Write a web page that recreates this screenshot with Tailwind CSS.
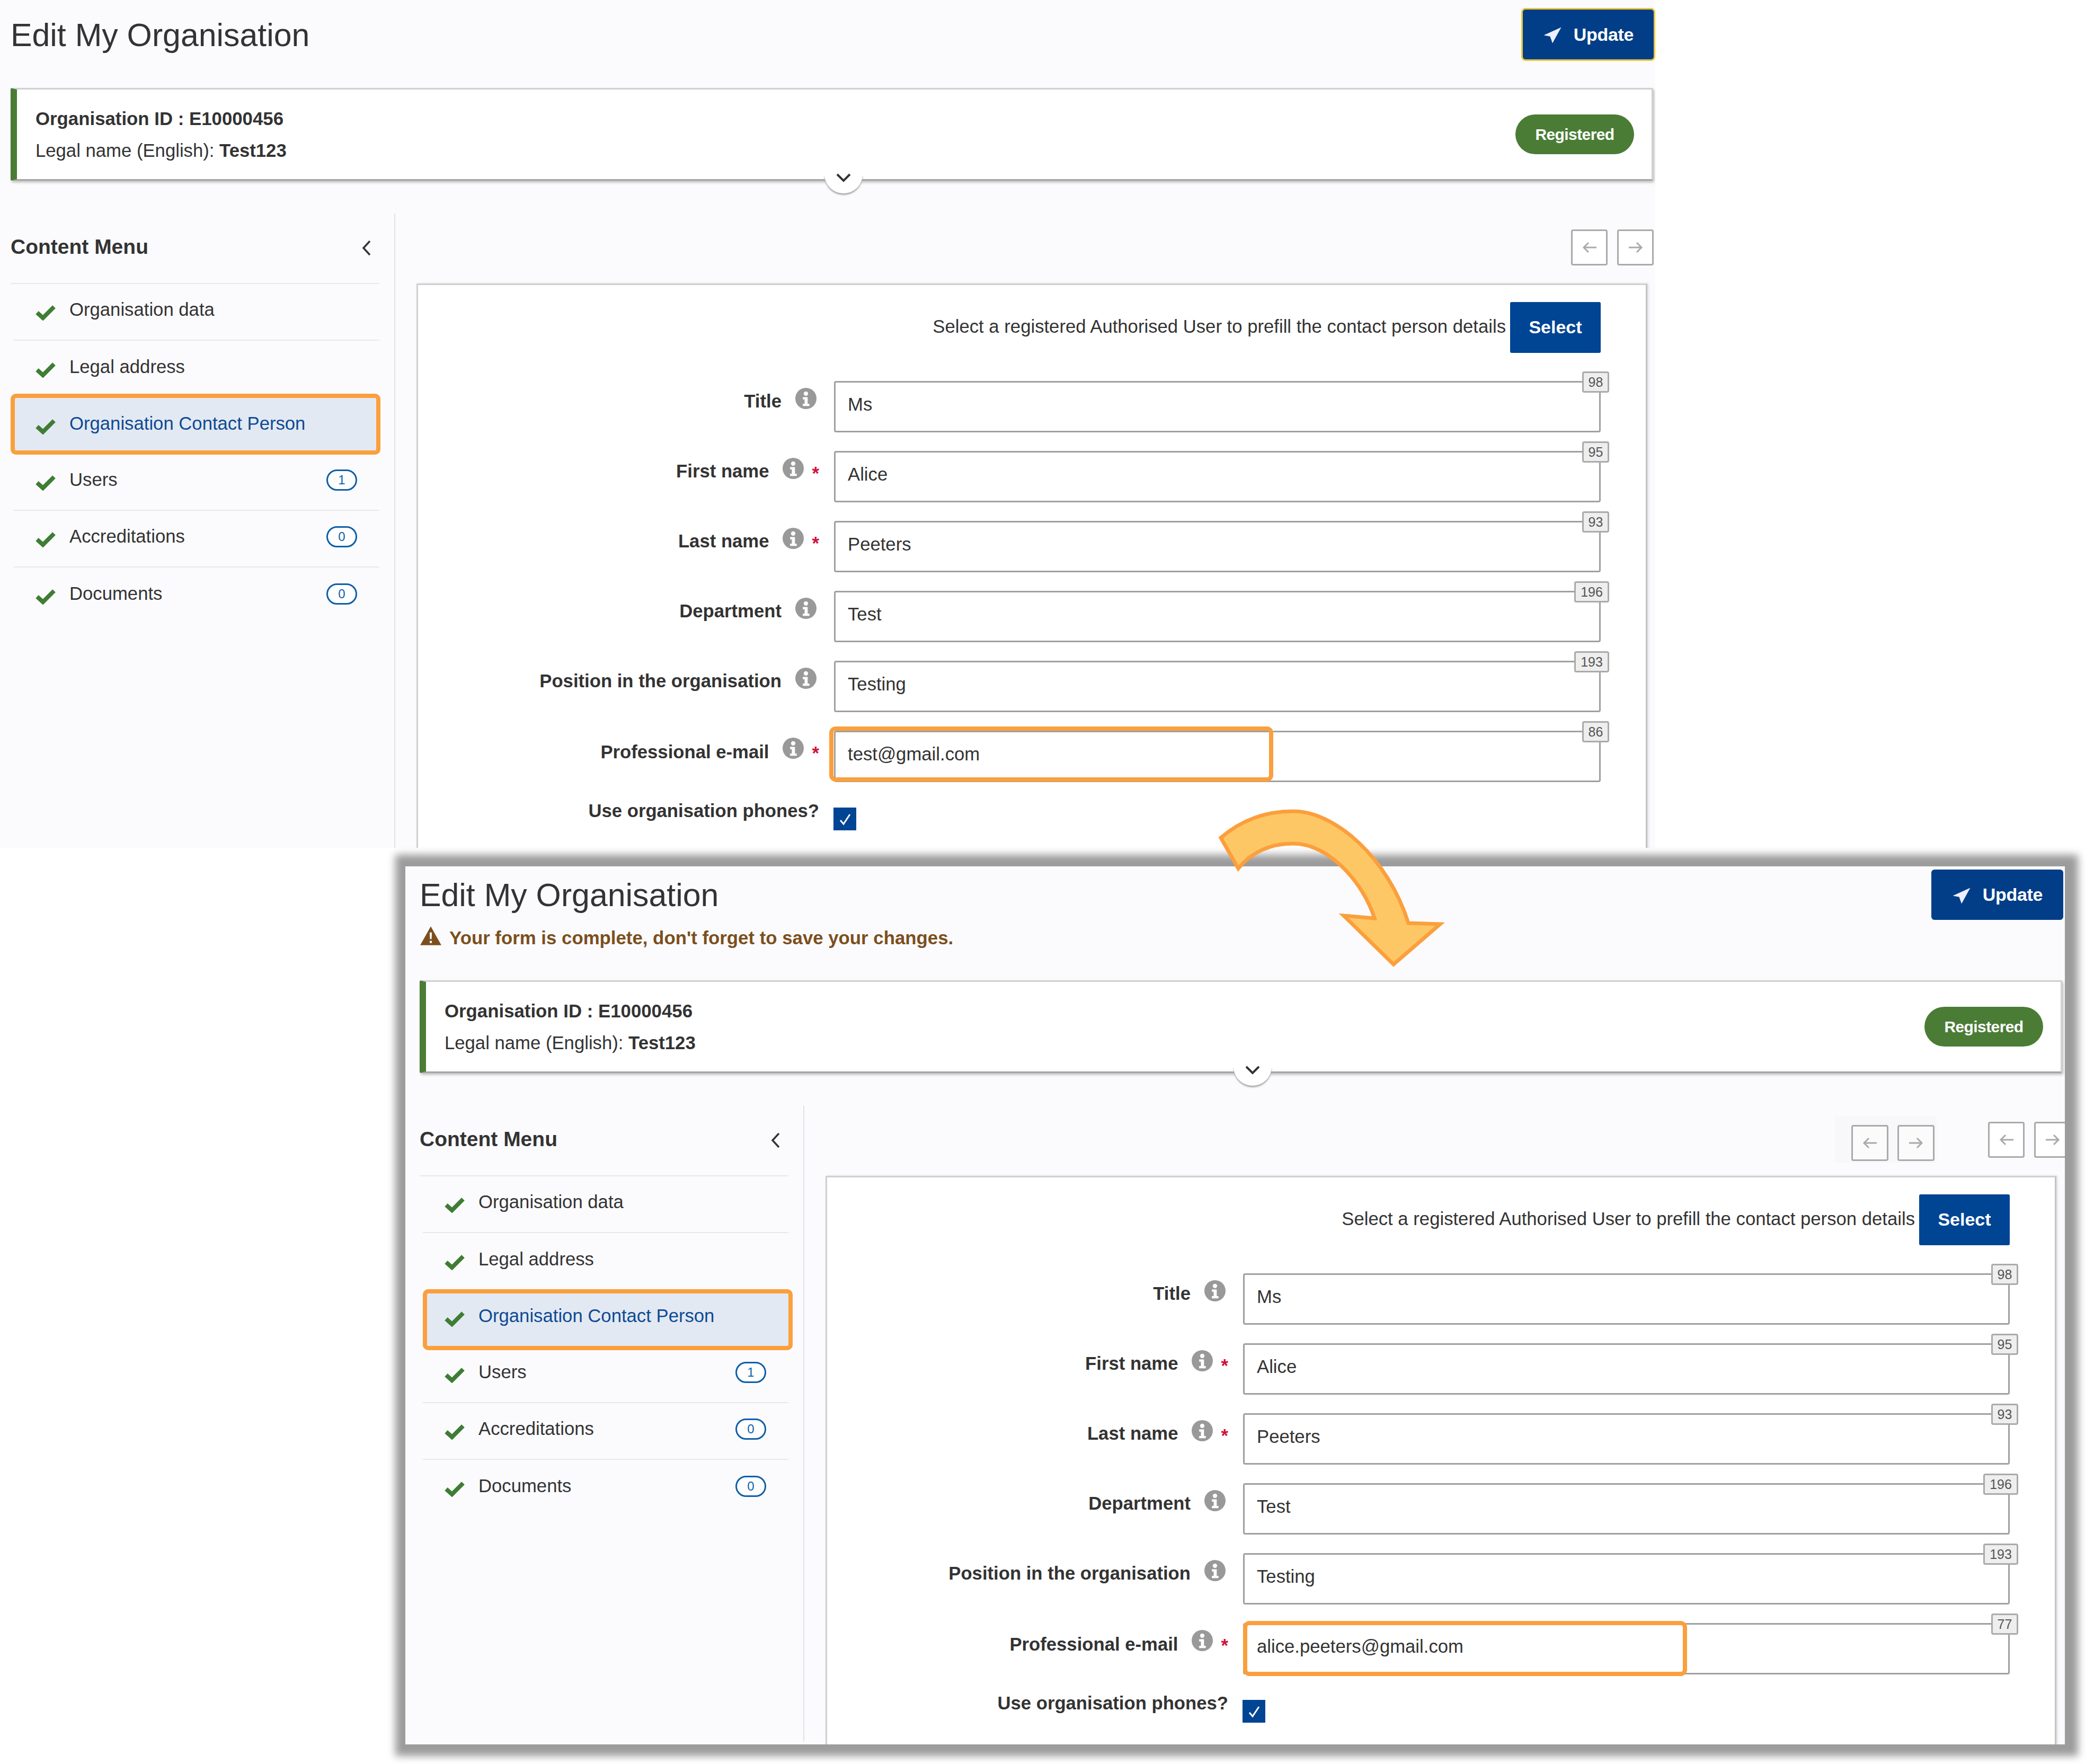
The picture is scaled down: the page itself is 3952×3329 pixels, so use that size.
<!DOCTYPE html>
<html><head><meta charset="utf-8">
<script src="https://cdn.jsdelivr.net/npm/@tailwindcss/browser@4"></script>
<title>Edit My Organisation</title></head>
<body class="bg-white">
<div class="relative w-[3952px] h-[3329px] overflow-hidden bg-white font-['Liberation_Sans',Arial,sans-serif] text-[34.7px] text-[#333]">

<!-- PANEL 1 -->
<section class="absolute left-0 top-0 w-[3124px] h-[1600px] overflow-hidden bg-[#fbfbfe]">
  <header class="flex justify-between h-[166px]">
    <h1 class="ml-[20px] mt-[32px] text-[60.8px] leading-[68px] font-normal text-[#333]">Edit My Organisation</h1>
    <button class="mt-[15px] w-[253px] h-[100px] flex items-center justify-center gap-[22px] bg-[#023e88] border-[3px] border-[#eac838] rounded-[8px] text-white font-bold text-[34px] tracking-[-0.3px]">
      <svg class="w-[36px] h-[36px]" viewBox="0 0 24 24"><path fill="#eef" d="M23 3 1 13l8 1.500L12 23z"/></svg><span>Update</span></button>
  </header>
  <div class="relative ml-[20px] w-[3100px] h-[175px] flex justify-between items-center bg-white border-[3px] border-l-[12px] border-[#d0d0d0] border-l-[#4a7c36] border-b-[#a5a5a5] rounded-[3px] shadow-[2px_3px_5px_#bbb]">
    <div class="pl-[35px] leading-[61px]">
      <p class="font-bold text-[34.8px]">Organisation ID : E10000456</p>
      <p>Legal name (English): <b>Test123</b></p>
    </div>
    <span class="mr-[33px] w-[224px] h-[75px] flex items-center justify-center rounded-full bg-[#4a7c36] text-white font-bold text-[30px] tracking-[-0.6px]">Registered</span>
    <span class="absolute left-[1524px] top-[160px] w-[72px] h-[36px] flex items-start justify-center rounded-b-full bg-white shadow-[0_3px_3px_#aaa]">
      <svg class="w-[32px] h-[24px] mt-[-6px]" viewBox="0 0 32 24" fill="none" stroke="#333" stroke-width="4"><path d="M4 6l12 12L28 6"/></svg></span>
  </div>
  <main class="flex mt-[62px]">
    <aside class="ml-[20px] w-[726px] h-[1200px] border-r-2 border-[#e2e2e6] pr-[28px]">
      <div class="relative h-[133px] ml-0 pt-[41px] border-b-2 border-[#e8e8ea]">
        <h2 class="font-bold text-[39px] leading-[44px] text-[#333]">Content Menu</h2>
        <svg class="absolute right-[14px] top-[50px] w-[20px] h-[30px]" viewBox="0 0 20 30" fill="none" stroke="#333" stroke-width="3.500"><path d="M16 2 4 15l12 13"/></svg>
      </div>
      <ul class="ml-[6px]">
        <li class="flex items-center h-[107px] pl-[41px] pb-[8px] border-b-2 border-[#e8e8ea]"><svg class="w-[38px] h-[30px] mr-[26px] mt-[10px]" viewBox="0 0 38 30" fill="none" stroke="#3f7d35" stroke-width="8"><path d="M3 15l11 10L35 4"/></svg><span>Organisation data</span></li>
        <li class="flex items-center h-[107px] pl-[41px] pb-[8px]"><svg class="w-[38px] h-[30px] mr-[26px] mt-[10px]" viewBox="0 0 38 30" fill="none" stroke="#3f7d35" stroke-width="8"><path d="M3 15l11 10L35 4"/></svg><span>Legal address</span></li>
        <li class="relative flex items-center -ml-[6px] w-[698px] h-[115px] -mt-[7px] -mb-[1px] pl-[39px] pb-[2px] border-[8px] border-[#fb9f3c] rounded-[10px] bg-[#e3e9f2] text-[#0e4a94]"><svg class="w-[38px] h-[30px] mr-[26px] mt-[10px]" viewBox="0 0 38 30" fill="none" stroke="#3f7d35" stroke-width="8"><path d="M3 15l11 10L35 4"/></svg><span>Organisation Contact Person</span></li>
        <li class="flex items-center h-[107px] pl-[41px] pb-[8px] border-b-2 border-[#e8e8ea]"><svg class="w-[38px] h-[30px] mr-[26px] mt-[10px]" viewBox="0 0 38 30" fill="none" stroke="#3f7d35" stroke-width="8"><path d="M3 15l11 10L35 4"/></svg><span>Users</span><span class="ml-auto mr-[42px] w-[58px] h-[40px] flex items-center justify-center rounded-full border-[3px] border-[#0e5fa8] bg-white text-[#0e5fa8] text-[24px]">1</span></li>
        <li class="flex items-center h-[107px] pl-[41px] pb-[8px] border-b-2 border-[#e8e8ea]"><svg class="w-[38px] h-[30px] mr-[26px] mt-[10px]" viewBox="0 0 38 30" fill="none" stroke="#3f7d35" stroke-width="8"><path d="M3 15l11 10L35 4"/></svg><span>Accreditations</span><span class="ml-auto mr-[42px] w-[58px] h-[40px] flex items-center justify-center rounded-full border-[3px] border-[#0e5fa8] bg-white text-[#0e5fa8] text-[24px]">0</span></li>
        <li class="flex items-center h-[107px] pl-[41px] pb-[8px]"><svg class="w-[38px] h-[30px] mr-[26px] mt-[10px]" viewBox="0 0 38 30" fill="none" stroke="#3f7d35" stroke-width="8"><path d="M3 15l11 10L35 4"/></svg><span>Documents</span><span class="ml-auto mr-[42px] w-[58px] h-[40px] flex items-center justify-center rounded-full border-[3px] border-[#0e5fa8] bg-white text-[#0e5fa8] text-[24px]">0</span></li>
      </ul>
    </aside>
    <div class="flex-1">
      <div class="flex justify-end gap-[18px] h-[132px] pt-[30px] pr-[3px]">
        <span class="w-[69px] h-[68px] flex items-center justify-center bg-white border-[3px] border-[#aaa] rounded-[4px]"><svg class="w-[28px] h-[24px]" viewBox="0 0 28 24" fill="none" stroke="#aaa" stroke-width="3"><path d="M27 12H3M12 3l-9 9 9 9"/></svg></span>
        <span class="w-[69px] h-[68px] flex items-center justify-center bg-white border-[3px] border-[#aaa] rounded-[4px]"><svg class="w-[28px] h-[24px]" viewBox="0 0 28 24" fill="none" stroke="#aaa" stroke-width="3"><path d="M1 12h24M16 3l9 9-9 9"/></svg></span>
      </div>
      <div class="ml-[40px] w-[2323px] h-[1200px] bg-white border-[3px] border-b-0 border-[#d0d0d0] border-r-[#c4c4c4] shadow-[2px_0_4px_#ddd]">
        <div class="flex justify-end items-center gap-[8px] mt-[32px] pr-[85px]">
          <span class="-mt-[4px]">Select a registered Authorised User to prefill the contact person details</span>
          <span class="w-[171px] h-[96px] pb-[2px] flex items-center justify-center bg-[#004494] rounded-[3px] text-white font-bold text-[34px]">Select</span>
        </div>
        <div class="mt-[53px]">
          <div class="flex h-[132px]"><div class="flex justify-end w-[785px] pr-[33px] pt-[14px] items-start"><span class="font-bold mt-[4px] leading-[40px]">Title</span><svg class="w-[40px] h-[40px] ml-[26px] -mt-[1px]" viewBox="0 0 24 24"><circle cx="12" cy="12" r="12" fill="#999"/><circle cx="12" cy="6.500" r="2.500" fill="#fff"/><path fill="#fff" d="M8.500 10.500h5.500v7.500h2v2.500H8.500V18h2v-5h-2z"/></svg></div><div class="relative w-[1447px] h-[97px] border-[3px] border-[#a0a0a0] rounded-[4px] bg-white pl-[23px] pt-[21px] leading-[40px]">Ms<span class="absolute right-[-19px] top-[-21px] w-[51px] h-[40px] flex items-center justify-center bg-[#eee] border-[3px] border-[#aaa] rounded-[4px] text-[25px] text-[#555]">98</span></div></div>
          <div class="flex h-[132px]"><div class="flex justify-end w-[785px] pr-[28px] pt-[14px] items-start"><span class="font-bold mt-[4px] leading-[40px]">First name</span><svg class="w-[40px] h-[40px] ml-[25px] -mt-[1px]" viewBox="0 0 24 24"><circle cx="12" cy="12" r="12" fill="#999"/><circle cx="12" cy="6.500" r="2.500" fill="#fff"/><path fill="#fff" d="M8.500 10.500h5.500v7.500h2v2.500H8.500V18h2v-5h-2z"/></svg><span class="ml-[16px] mt-[8px] text-[#d0103a] font-bold leading-[40px]">*</span></div><div class="relative w-[1447px] h-[97px] border-[3px] border-[#a0a0a0] rounded-[4px] bg-white pl-[23px] pt-[21px] leading-[40px]">Alice<span class="absolute right-[-19px] top-[-21px] w-[51px] h-[40px] flex items-center justify-center bg-[#eee] border-[3px] border-[#aaa] rounded-[4px] text-[25px] text-[#555]">95</span></div></div>
          <div class="flex h-[132px]"><div class="flex justify-end w-[785px] pr-[28px] pt-[14px] items-start"><span class="font-bold mt-[4px] leading-[40px]">Last name</span><svg class="w-[40px] h-[40px] ml-[25px] -mt-[1px]" viewBox="0 0 24 24"><circle cx="12" cy="12" r="12" fill="#999"/><circle cx="12" cy="6.500" r="2.500" fill="#fff"/><path fill="#fff" d="M8.500 10.500h5.500v7.500h2v2.500H8.500V18h2v-5h-2z"/></svg><span class="ml-[16px] mt-[8px] text-[#d0103a] font-bold leading-[40px]">*</span></div><div class="relative w-[1447px] h-[97px] border-[3px] border-[#a0a0a0] rounded-[4px] bg-white pl-[23px] pt-[21px] leading-[40px]">Peeters<span class="absolute right-[-19px] top-[-21px] w-[51px] h-[40px] flex items-center justify-center bg-[#eee] border-[3px] border-[#aaa] rounded-[4px] text-[25px] text-[#555]">93</span></div></div>
          <div class="flex h-[132px]"><div class="flex justify-end w-[785px] pr-[33px] pt-[14px] items-start"><span class="font-bold mt-[4px] leading-[40px]">Department</span><svg class="w-[40px] h-[40px] ml-[26px] -mt-[1px]" viewBox="0 0 24 24"><circle cx="12" cy="12" r="12" fill="#999"/><circle cx="12" cy="6.500" r="2.500" fill="#fff"/><path fill="#fff" d="M8.500 10.500h5.500v7.500h2v2.500H8.500V18h2v-5h-2z"/></svg></div><div class="relative w-[1447px] h-[97px] border-[3px] border-[#a0a0a0] rounded-[4px] bg-white pl-[23px] pt-[21px] leading-[40px]">Test<span class="absolute right-[-19px] top-[-21px] w-[66px] h-[40px] flex items-center justify-center bg-[#eee] border-[3px] border-[#aaa] rounded-[4px] text-[25px] text-[#555]">196</span></div></div>
          <div class="flex h-[132px]"><div class="flex justify-end w-[785px] pr-[33px] pt-[14px] items-start"><span class="font-bold mt-[4px] leading-[40px]">Position in the organisation</span><svg class="w-[40px] h-[40px] ml-[26px] -mt-[1px]" viewBox="0 0 24 24"><circle cx="12" cy="12" r="12" fill="#999"/><circle cx="12" cy="6.500" r="2.500" fill="#fff"/><path fill="#fff" d="M8.500 10.500h5.500v7.500h2v2.500H8.500V18h2v-5h-2z"/></svg></div><div class="relative w-[1447px] h-[97px] border-[3px] border-[#a0a0a0] rounded-[4px] bg-white pl-[23px] pt-[21px] leading-[40px]">Testing<span class="absolute right-[-19px] top-[-21px] w-[66px] h-[40px] flex items-center justify-center bg-[#eee] border-[3px] border-[#aaa] rounded-[4px] text-[25px] text-[#555]">193</span></div></div>
          <div class="flex h-[132px]"><div class="flex justify-end w-[785px] pr-[28px] pt-[14px] items-start"><span class="font-bold mt-[6px] leading-[40px]">Professional e-mail</span><svg class="w-[40px] h-[40px] ml-[25px] -mt-[1px]" viewBox="0 0 24 24"><circle cx="12" cy="12" r="12" fill="#999"/><circle cx="12" cy="6.500" r="2.500" fill="#fff"/><path fill="#fff" d="M8.500 10.500h5.500v7.500h2v2.500H8.500V18h2v-5h-2z"/></svg><span class="ml-[16px] mt-[8px] text-[#d0103a] font-bold leading-[40px]">*</span></div><div class="relative w-[1447px] h-[97px] border-[3px] border-[#a0a0a0] rounded-[4px] bg-white pl-[23px] pt-[21px] leading-[40px]">test@gmail.com<span class="absolute left-[-12px] top-[-11px] w-[838px] h-[104px] border-[8px] border-[#fb9f3c] rounded-[12px]"></span><span class="absolute right-[-19px] top-[-21px] w-[51px] h-[40px] flex items-center justify-center bg-[#eee] border-[3px] border-[#aaa] rounded-[4px] text-[25px] text-[#555]">86</span></div></div>
          <div class="flex h-[60px]"><div class="flex justify-end w-[785px] pr-[28px]"><span class="font-bold leading-[40px] -mt-[1px]">Use organisation phones?</span></div><span class="w-[43px] h-[43px] mt-[13px] -ml-[1px] flex items-center justify-center bg-[#004494]"><svg class="w-[30px] h-[30px]" viewBox="0 0 30 30" fill="none" stroke="#fff" stroke-width="3"><path d="M6 17l6 7L24 6"/></svg></span></div>
        </div>
      </div>
    </div>
  </main>
</section>

<!-- PANEL 2 -->
<section class="absolute left-[765px] top-[1635px] w-[3132px] h-[1657px] overflow-hidden bg-[#fbfbfe] shadow-[3px_0_14px_22px_#9c9c9c]">
 <div class="ml-[7px] w-[3124px]">
  <header class="relative flex justify-between h-[215px]">
    <div class="ml-[20px]">
      <h1 class="mt-[20px] text-[60.8px] leading-[68px] font-normal text-[#333]">Edit My Organisation</h1>
      <p class="flex items-center mt-[21px] font-bold text-[34.8px] text-[#7b4f1d]"><svg class="w-[42px] h-[38px] mr-[14px] -mt-[8px]" viewBox="0 0 40 36"><path fill="#7b4f1d" d="M20 1 39 35H1z"/><path fill="#fbfbfe" d="M18 12h4l-.5 12h-3zM18 27h4v4h-4z"/></svg>Your form is complete, don't forget to save your changes.</p>
    </div>
    <button class="mt-[6px] mr-[2px] w-[249px] h-[95px] flex items-center justify-center gap-[22px] bg-[#023e88] rounded-[6px] text-white font-bold text-[34px] tracking-[-0.3px]">
      <svg class="w-[36px] h-[36px]" viewBox="0 0 24 24"><path fill="#eef" d="M23 3 1 13l8 1.500L12 23z"/></svg><span>Update</span></button>
  </header>
  <div class="relative ml-[20px] w-[3100px] h-[175px] flex justify-between items-center bg-white border-[3px] border-l-[12px] border-[#d0d0d0] border-l-[#4a7c36] border-b-[#a5a5a5] rounded-[3px] shadow-[2px_3px_5px_#bbb]">
    <div class="pl-[35px] leading-[61px]">
      <p class="font-bold text-[34.8px]">Organisation ID : E10000456</p>
      <p>Legal name (English): <b>Test123</b></p>
    </div>
    <span class="mr-[33px] w-[224px] h-[75px] flex items-center justify-center rounded-full bg-[#4a7c36] text-white font-bold text-[30px] tracking-[-0.6px]">Registered</span>
    <span class="absolute left-[1524px] top-[160px] w-[72px] h-[36px] flex items-start justify-center rounded-b-full bg-white shadow-[0_3px_3px_#aaa]">
      <svg class="w-[32px] h-[24px] mt-[-6px]" viewBox="0 0 32 24" fill="none" stroke="#333" stroke-width="4"><path d="M4 6l12 12L28 6"/></svg></span>
  </div>
  <main class="flex mt-[62px]">
    <aside class="ml-[20px] w-[726px] h-[1200px] border-r-2 border-[#e2e2e6] pr-[28px]">
      <div class="relative h-[133px] pt-[41px] border-b-2 border-[#e8e8ea]">
        <h2 class="font-bold text-[39px] leading-[44px] text-[#333]">Content Menu</h2>
        <svg class="absolute right-[14px] top-[50px] w-[20px] h-[30px]" viewBox="0 0 20 30" fill="none" stroke="#333" stroke-width="3.500"><path d="M16 2 4 15l12 13"/></svg>
      </div>
      <ul class="ml-[6px]">
        <li class="flex items-center h-[107px] pl-[41px] pb-[8px] border-b-2 border-[#e8e8ea]"><svg class="w-[38px] h-[30px] mr-[26px] mt-[10px]" viewBox="0 0 38 30" fill="none" stroke="#3f7d35" stroke-width="8"><path d="M3 15l11 10L35 4"/></svg><span>Organisation data</span></li>
        <li class="flex items-center h-[107px] pl-[41px] pb-[8px]"><svg class="w-[38px] h-[30px] mr-[26px] mt-[10px]" viewBox="0 0 38 30" fill="none" stroke="#3f7d35" stroke-width="8"><path d="M3 15l11 10L35 4"/></svg><span>Legal address</span></li>
        <li class="relative flex items-center w-[698px] h-[115px] -mt-[1px] -mb-[7px] pl-[33px] border-[8px] border-[#fb9f3c] rounded-[10px] bg-[#e3e9f2] text-[#0e4a94]"><svg class="w-[38px] h-[30px] mr-[26px] mt-[-4px]" viewBox="0 0 38 30" fill="none" stroke="#3f7d35" stroke-width="8"><path d="M3 15l11 10L35 4"/></svg><span class="-mt-[14px]">Organisation Contact Person</span></li>
        <li class="flex items-center h-[107px] pl-[41px] pb-[8px] border-b-2 border-[#e8e8ea]"><svg class="w-[38px] h-[30px] mr-[26px] mt-[10px]" viewBox="0 0 38 30" fill="none" stroke="#3f7d35" stroke-width="8"><path d="M3 15l11 10L35 4"/></svg><span>Users</span><span class="ml-auto mr-[42px] w-[58px] h-[40px] flex items-center justify-center rounded-full border-[3px] border-[#0e5fa8] bg-white text-[#0e5fa8] text-[24px]">1</span></li>
        <li class="flex items-center h-[107px] pl-[41px] pb-[8px] border-b-2 border-[#e8e8ea]"><svg class="w-[38px] h-[30px] mr-[26px] mt-[10px]" viewBox="0 0 38 30" fill="none" stroke="#3f7d35" stroke-width="8"><path d="M3 15l11 10L35 4"/></svg><span>Accreditations</span><span class="ml-auto mr-[42px] w-[58px] h-[40px] flex items-center justify-center rounded-full border-[3px] border-[#0e5fa8] bg-white text-[#0e5fa8] text-[24px]">0</span></li>
        <li class="flex items-center h-[107px] pl-[41px] pb-[8px]"><svg class="w-[38px] h-[30px] mr-[26px] mt-[10px]" viewBox="0 0 38 30" fill="none" stroke="#3f7d35" stroke-width="8"><path d="M3 15l11 10L35 4"/></svg><span>Documents</span><span class="ml-auto mr-[42px] w-[58px] h-[40px] flex items-center justify-center rounded-full border-[3px] border-[#0e5fa8] bg-white text-[#0e5fa8] text-[24px]">0</span></li>
      </ul>
    </aside>
    <div class="relative flex-1">
      <div class="absolute left-[1945px] top-[19px] w-[192px] h-[89px] bg-[#f8f8fa]"></div>
      <div class="absolute left-[1976px] top-[36px] flex gap-[17px]">
        <span class="w-[70px] h-[68px] flex items-center justify-center bg-[#fbfbfb] border-[3px] border-[#aaa] rounded-[4px]"><svg class="w-[28px] h-[24px]" viewBox="0 0 28 24" fill="none" stroke="#aaa" stroke-width="3"><path d="M27 12H3M12 3l-9 9 9 9"/></svg></span>
        <span class="w-[70px] h-[68px] flex items-center justify-center bg-[#fbfbfb] border-[3px] border-[#aaa] rounded-[4px]"><svg class="w-[28px] h-[24px]" viewBox="0 0 28 24" fill="none" stroke="#aaa" stroke-width="3"><path d="M1 12h24M16 3l9 9-9 9"/></svg></span>
      </div>
      <div class="relative flex gap-[18px] h-[132px] pt-[30px] pl-[2234px]">
        <span class="w-[69px] h-[68px] flex items-center justify-center bg-white border-[3px] border-[#aaa] rounded-[4px]"><svg class="w-[28px] h-[24px]" viewBox="0 0 28 24" fill="none" stroke="#aaa" stroke-width="3"><path d="M27 12H3M12 3l-9 9 9 9"/></svg></span>
        <span class="w-[69px] h-[68px] flex items-center justify-center bg-white border-[3px] border-[#aaa] rounded-[4px]"><svg class="w-[28px] h-[24px]" viewBox="0 0 28 24" fill="none" stroke="#aaa" stroke-width="3"><path d="M1 12h24M16 3l9 9-9 9"/></svg></span>
      </div>
      <div class="ml-[40px] w-[2323px] h-[1200px] bg-white border-[3px] border-b-0 border-[#d0d0d0] border-r-[#c4c4c4] shadow-[2px_0_4px_#ddd]">
        <div class="flex justify-end items-center gap-[8px] mt-[32px] pr-[85px]">
          <span class="-mt-[4px]">Select a registered Authorised User to prefill the contact person details</span>
          <span class="w-[171px] h-[96px] pb-[2px] flex items-center justify-center bg-[#004494] rounded-[3px] text-white font-bold text-[34px]">Select</span>
        </div>
        <div class="mt-[53px]">
          <div class="flex h-[132px]"><div class="flex justify-end w-[785px] pr-[33px] pt-[14px] items-start"><span class="font-bold mt-[4px] leading-[40px]">Title</span><svg class="w-[40px] h-[40px] ml-[26px] -mt-[1px]" viewBox="0 0 24 24"><circle cx="12" cy="12" r="12" fill="#999"/><circle cx="12" cy="6.500" r="2.500" fill="#fff"/><path fill="#fff" d="M8.500 10.500h5.500v7.500h2v2.500H8.500V18h2v-5h-2z"/></svg></div><div class="relative w-[1447px] h-[97px] border-[3px] border-[#a0a0a0] rounded-[4px] bg-white pl-[23px] pt-[21px] leading-[40px]">Ms<span class="absolute right-[-19px] top-[-21px] w-[51px] h-[40px] flex items-center justify-center bg-[#eee] border-[3px] border-[#aaa] rounded-[4px] text-[25px] text-[#555]">98</span></div></div>
          <div class="flex h-[132px]"><div class="flex justify-end w-[785px] pr-[28px] pt-[14px] items-start"><span class="font-bold mt-[4px] leading-[40px]">First name</span><svg class="w-[40px] h-[40px] ml-[25px] -mt-[1px]" viewBox="0 0 24 24"><circle cx="12" cy="12" r="12" fill="#999"/><circle cx="12" cy="6.500" r="2.500" fill="#fff"/><path fill="#fff" d="M8.500 10.500h5.500v7.500h2v2.500H8.500V18h2v-5h-2z"/></svg><span class="ml-[16px] mt-[8px] text-[#d0103a] font-bold leading-[40px]">*</span></div><div class="relative w-[1447px] h-[97px] border-[3px] border-[#a0a0a0] rounded-[4px] bg-white pl-[23px] pt-[21px] leading-[40px]">Alice<span class="absolute right-[-19px] top-[-21px] w-[51px] h-[40px] flex items-center justify-center bg-[#eee] border-[3px] border-[#aaa] rounded-[4px] text-[25px] text-[#555]">95</span></div></div>
          <div class="flex h-[132px]"><div class="flex justify-end w-[785px] pr-[28px] pt-[14px] items-start"><span class="font-bold mt-[4px] leading-[40px]">Last name</span><svg class="w-[40px] h-[40px] ml-[25px] -mt-[1px]" viewBox="0 0 24 24"><circle cx="12" cy="12" r="12" fill="#999"/><circle cx="12" cy="6.500" r="2.500" fill="#fff"/><path fill="#fff" d="M8.500 10.500h5.500v7.500h2v2.500H8.500V18h2v-5h-2z"/></svg><span class="ml-[16px] mt-[8px] text-[#d0103a] font-bold leading-[40px]">*</span></div><div class="relative w-[1447px] h-[97px] border-[3px] border-[#a0a0a0] rounded-[4px] bg-white pl-[23px] pt-[21px] leading-[40px]">Peeters<span class="absolute right-[-19px] top-[-21px] w-[51px] h-[40px] flex items-center justify-center bg-[#eee] border-[3px] border-[#aaa] rounded-[4px] text-[25px] text-[#555]">93</span></div></div>
          <div class="flex h-[132px]"><div class="flex justify-end w-[785px] pr-[33px] pt-[14px] items-start"><span class="font-bold mt-[4px] leading-[40px]">Department</span><svg class="w-[40px] h-[40px] ml-[26px] -mt-[1px]" viewBox="0 0 24 24"><circle cx="12" cy="12" r="12" fill="#999"/><circle cx="12" cy="6.500" r="2.500" fill="#fff"/><path fill="#fff" d="M8.500 10.500h5.500v7.500h2v2.500H8.500V18h2v-5h-2z"/></svg></div><div class="relative w-[1447px] h-[97px] border-[3px] border-[#a0a0a0] rounded-[4px] bg-white pl-[23px] pt-[21px] leading-[40px]">Test<span class="absolute right-[-19px] top-[-21px] w-[66px] h-[40px] flex items-center justify-center bg-[#eee] border-[3px] border-[#aaa] rounded-[4px] text-[25px] text-[#555]">196</span></div></div>
          <div class="flex h-[132px]"><div class="flex justify-end w-[785px] pr-[33px] pt-[14px] items-start"><span class="font-bold mt-[4px] leading-[40px]">Position in the organisation</span><svg class="w-[40px] h-[40px] ml-[26px] -mt-[1px]" viewBox="0 0 24 24"><circle cx="12" cy="12" r="12" fill="#999"/><circle cx="12" cy="6.500" r="2.500" fill="#fff"/><path fill="#fff" d="M8.500 10.500h5.500v7.500h2v2.500H8.500V18h2v-5h-2z"/></svg></div><div class="relative w-[1447px] h-[97px] border-[3px] border-[#a0a0a0] rounded-[4px] bg-white pl-[23px] pt-[21px] leading-[40px]">Testing<span class="absolute right-[-19px] top-[-21px] w-[66px] h-[40px] flex items-center justify-center bg-[#eee] border-[3px] border-[#aaa] rounded-[4px] text-[25px] text-[#555]">193</span></div></div>
          <div class="flex h-[132px]"><div class="flex justify-end w-[785px] pr-[28px] pt-[14px] items-start"><span class="font-bold mt-[6px] leading-[40px]">Professional e-mail</span><svg class="w-[40px] h-[40px] ml-[25px] -mt-[1px]" viewBox="0 0 24 24"><circle cx="12" cy="12" r="12" fill="#999"/><circle cx="12" cy="6.500" r="2.500" fill="#fff"/><path fill="#fff" d="M8.500 10.500h5.500v7.500h2v2.500H8.500V18h2v-5h-2z"/></svg><span class="ml-[16px] mt-[8px] text-[#d0103a] font-bold leading-[40px]">*</span></div><div class="relative w-[1447px] h-[97px] border-[3px] border-[#a0a0a0] rounded-[4px] bg-white pl-[23px] pt-[21px] leading-[40px]">alice.peeters@gmail.com<span class="absolute left-[-3px] top-[-7px] w-[838px] h-[104px] border-[8px] border-[#fb9f3c] rounded-[12px]"></span><span class="absolute right-[-19px] top-[-21px] w-[51px] h-[40px] flex items-center justify-center bg-[#eee] border-[3px] border-[#aaa] rounded-[4px] text-[25px] text-[#555]">77</span></div></div>
          <div class="flex h-[60px]"><div class="flex justify-end w-[785px] pr-[28px]"><span class="font-bold leading-[40px] -mt-[1px]">Use organisation phones?</span></div><span class="w-[43px] h-[43px] mt-[13px] -ml-[1px] flex items-center justify-center bg-[#004494]"><svg class="w-[30px] h-[30px]" viewBox="0 0 30 30" fill="none" stroke="#fff" stroke-width="3"><path d="M6 17l6 7L24 6"/></svg></span></div>
        </div>
      </div>
    </div>
  </main>
 </div>
</section>

<!-- big arrow -->
<svg class="absolute left-[2280px] top-[1510px] w-[470px] h-[330px]" viewBox="0 0 470 330"><path d="M24 71C60 40 105 21 161 21C240 21 340 110 378 232L438 234L350 310L256 218L314 223C295 160 230 82 161 82C115 82 80 100 57 129Z" fill="#fdc765" stroke="#fb9f3c" stroke-width="7" stroke-linejoin="miter"/></svg>
</div>
</body></html>
